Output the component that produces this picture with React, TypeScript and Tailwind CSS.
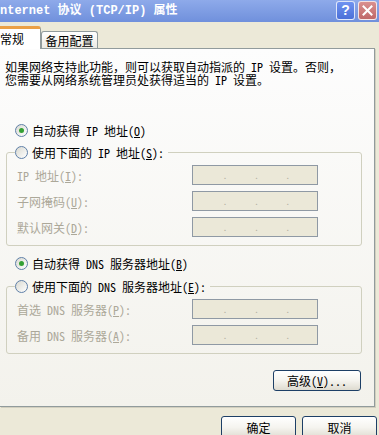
import React from "react";

function Radio({ checked }: { checked?: boolean }) {
  return (
    <span className="w-[13px] h-[13px] rounded-full border border-[#5f80a8] bg-linear-to-br from-[#d9d9d1] to-white flex items-center justify-center shrink-0">
      {checked && <span className="w-[5px] h-[5px] rounded-full bg-[#34a034]" />}
    </span>
  );
}

function IpBox() {
  return (
    <div className="w-[126px] h-[20px] border border-[#8f99a4] bg-[#ebe8d8] flex items-center justify-evenly pl-[3px] text-[9px] leading-none text-[#b5b2a3]">
      <span>.</span>
      <span>.</span>
      <span>.</span>
    </div>
  );
}

function Row({ children }: { children: React.ReactNode }) {
  return (
    <div className="flex items-center h-[20px]">
      <span className="w-[175px] text-[#aca899] whitespace-nowrap">{children}</span>
      <IpBox />
    </div>
  );
}

function Btn({ children, w, h }: { children: React.ReactNode; w: string; h: string }) {
  return (
    <div
      className={`${w} ${h} shrink-0 rounded-[3px] border border-[#1d3f66] bg-linear-to-b from-white via-[#f5f4ef] to-[#dedbd0] flex items-center justify-center text-black`}
    >
      {children}
    </div>
  );
}

export default function App() {
  return (
    <div className="w-[379px] h-[435px] overflow-hidden bg-[#ece9d8] flex flex-col text-[12px] leading-[13px] text-black font-[family-name:'Noto_Sans_Mono_CJK_SC','Noto_Sans_CJK_SC',sans-serif]">
      {/* Title bar */}
      <div className="h-[22px] shrink-0 flex bg-linear-to-b from-[#8eaaea] to-[#7090dc] overflow-hidden">
        <div className="flex-1 pt-[5px] text-white font-bold text-[12px] leading-[13px] whitespace-nowrap font-[family-name:'Liberation_Mono','Noto_Sans_CJK_SC',monospace]">
          nternet 协议 (TCP/IP) 属性
        </div>
        <div className="flex gap-[3px] pr-[2px] pt-[1px]">
          <div className="w-[19px] h-[19px] rounded-[3px] border border-white/80 bg-linear-to-b from-[#6f92f0] to-[#4b70d8] flex items-center justify-center text-white font-bold text-[14px] font-[family-name:'Liberation_Sans',sans-serif]">
            ?
          </div>
          <div className="w-[19px] h-[19px] rounded-[3px] border border-white/80 bg-linear-to-b from-[#d99090] to-[#c06868] flex items-center justify-center">
            <svg width="11" height="11" viewBox="0 0 11 11">
              <path d="M1.5 1.5 L9.5 9.5 M9.5 1.5 L1.5 9.5" stroke="white" strokeWidth="2" strokeLinecap="square" />
            </svg>
          </div>
        </div>
      </div>

      {/* Tabs */}
      <div className="h-[26px] shrink-0 flex items-end relative z-10">
        <div className="w-[41px] h-[23px] -mb-[1px] bg-white border-t-[3px] border-t-[#eba046] border-r border-r-[#919b9c] rounded-tr-[3px] flex items-center pb-[2px]">
          常规
        </div>
        <div className="w-[57px] h-[17px] border border-b-0 border-[#919b9c] rounded-t-[3px] bg-linear-to-b from-white to-[#eceae3] flex items-center justify-center">
          备用配置
        </div>
      </div>

      {/* Panel */}
      <div className="w-[375px] h-[359px] shrink-0 border-t border-r border-b border-[#919b9c] bg-linear-to-b from-[#fdfdfd] to-[#f3f2ec] pt-[11px] shadow-[1px_1px_0_#d2cfbf]">
        <div className="pl-[5px] whitespace-nowrap">
          <div className="h-[13px]">如果网络支持此功能，则可以获取自动指派的 IP 设置。否则，</div>
          <div className="h-[13px]">您需要从网络系统管理员处获得适当的 IP 设置。</div>
        </div>

        <div className="ml-[15px] mt-[38px] flex items-center gap-[4px] h-[13px]">
          <Radio checked />
          <span>
            自动获得 IP 地址(<u>O</u>)
          </span>
        </div>

        <fieldset className="ml-[6px] mt-[9px] w-[356px] border border-[#d0d0bf] rounded-[3px]">
          <legend className="ml-[8px] pr-[4px]">
            <div className="flex items-center gap-[4px] h-[13px]">
              <Radio />
              <span>
                使用下面的 IP 地址(<u>S</u>):
              </span>
            </div>
          </legend>
          <div className="pl-[10px] pt-[6px] pb-[8px] flex flex-col gap-[6px]">
            <Row>
              IP 地址(<u>I</u>):
            </Row>
            <Row>
              子网掩码(<u>U</u>):
            </Row>
            <Row>
              默认网关(<u>D</u>):
            </Row>
          </div>
        </fieldset>

        <div className="ml-[15px] mt-[11px] flex items-center gap-[4px] h-[13px]">
          <Radio checked />
          <span>
            自动获得 DNS 服务器地址(<u>B</u>)
          </span>
        </div>

        <fieldset className="ml-[6px] mt-[10px] w-[356px] border border-[#d0d0bf] rounded-[3px]">
          <legend className="ml-[8px] pr-[4px]">
            <div className="flex items-center gap-[4px] h-[13px]">
              <Radio />
              <span>
                使用下面的 DNS 服务器地址(<u>E</u>):
              </span>
            </div>
          </legend>
          <div className="pl-[10px] pt-[6px] pb-[8px] flex flex-col gap-[6px]">
            <Row>
              首选 DNS 服务器(<u>P</u>):
            </Row>
            <Row>
              备用 DNS 服务器(<u>A</u>):
            </Row>
          </div>
        </fieldset>

        <div className="ml-[273px] mt-[16px]">
          <Btn w="w-[88px]" h="h-[21px]">
            高级(<u>V</u>)...
          </Btn>
        </div>
      </div>

      {/* Bottom buttons */}
      <div className="mt-[9px] flex justify-end gap-[6px] pr-[2px]">
        <Btn w="w-[75px]" h="h-[23px]">确定</Btn>
        <Btn w="w-[75px]" h="h-[23px]">取消</Btn>
      </div>
    </div>
  );
}
